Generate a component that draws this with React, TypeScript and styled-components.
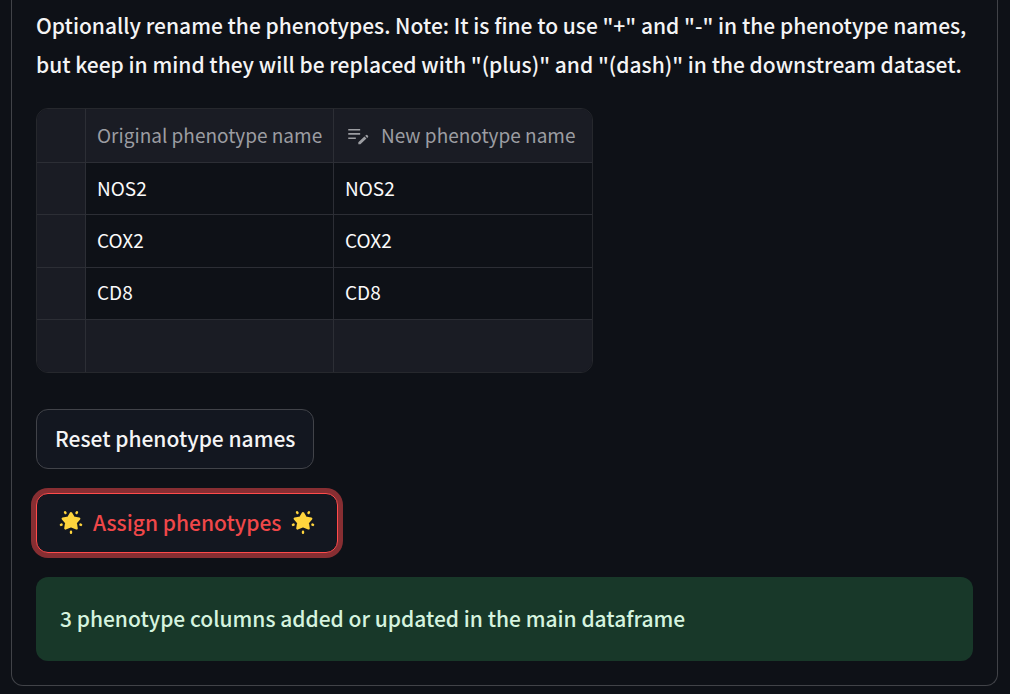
import React from "react";
import styled, { createGlobalStyle, css } from "styled-components";

const GlobalStyle = createGlobalStyle`
  *, *::before, *::after { box-sizing: border-box; }
  body {
    margin: 0;
    background: #0e1117;
    color: #f4f4f5;
    font-family: "Noto Sans CJK SC", "Noto Sans", sans-serif;
    font-size: 21px;
    font-weight: 500;
    line-height: 39px;
  }
`;

const Page = styled.main`
  padding: 0 12px 8px 11px;
`;

const Panel = styled.section`
  display: flex;
  flex-direction: column;
  align-items: flex-start;
  padding: 6px 24px 24px;
  border: 1px solid #414348;
  border-top: 0;
  border-radius: 0 0 12px 12px;
`;

const Instructions = styled.p`
  margin: 0 0 24px;
`;

const GridFrame = styled.div`
  overflow: hidden;
  margin-bottom: 36px;
  border: 1px solid #26282d;
  border-radius: 12px;
`;

const Grid = styled.table`
  border-collapse: separate;
  border-spacing: 0;
  table-layout: fixed;
  width: 555px;
  height: 263px;
  font-size: 19px;
  line-height: 28px;
`;

const IndexColumn = styled.col`
  width: 49px;
`;

const OriginalColumn = styled.col`
  width: 248px;
`;

const cell = css`
  height: 52px;
  padding: 0 11px 2px;
  text-align: left;
  font-weight: 400;
  white-space: nowrap;
  border-right: 1px solid #2c2e35;
  border-bottom: 1px solid #2c2e35;

  &:last-child { border-right: 0; }
`;

const HeadCell = styled.th`
  ${cell}
  height: 54px;
  background: #1a1c24;
  color: #9c9da2;
`;

const Cell = styled.td<{ $shaded?: boolean; $last?: boolean }>`
  ${cell}
  color: #fafafa;
  background: ${(p) => (p.$shaded ? "#1a1c24" : "#0e1117")};
  ${(p) => p.$last && "border-bottom: 0;"}
`;

const HeadLabel = styled.span`
  display: flex;
  align-items: center;
  gap: 10px;
`;

const Button = styled.button<{ $active?: boolean }>`
  display: flex;
  align-items: center;
  gap: 9px;
  height: 60px;
  margin: 0 0 24px;
  padding: 0 ${(p) => (p.$active ? 21 : 18)}px 2px;
  border: 1px solid ${(p) => (p.$active ? "#ff4b4b" : "#414349")};
  border-radius: 12px;
  background: #131720;
  color: ${(p) => (p.$active ? "#f04749" : "#f4f4f5")};
  box-shadow: ${(p) => (p.$active ? "0 0 0 5px #872e32" : "none")};
  font: inherit;
  white-space: nowrap;
  cursor: pointer;
`;

const Alert = styled.div`
  align-self: stretch;
  padding: 22px 24px 23px;
  border-radius: 12px;
  background: #183829;
  color: #d5f3df;
`;

const EditIcon = () => (
  <svg width="26" height="26" viewBox="0 0 24 24" fill="currentColor" aria-hidden="true">
    <path d="M3 10.2h11v1.6H3zM3 6.4h11v1.4H3zM3 14.2h7v1.4H3zM18.6 12.8l.7-.6a1 1 0 0 1 1.4 0l.5.5c.4.4.4 1 0 1.4l-.7.6zM17.9 13.4l-5.6 5.2v1.9h1.9l5.6-5.2z" />
  </svg>
);

const GlowingStar = () => (
  <svg width="26" height="26" viewBox="0 0 26 26" fill="#ffd53d" stroke="#ffd53d" strokeLinejoin="round" strokeLinecap="round" aria-hidden="true">
    <path strokeWidth="2.4" d="M13 4.2l2.6 4.5 5.6.9-3.5 4.1.9 5.7-5.6-2.3-5.6 2.3.9-5.7-3.5-4.1 5.6-.9z" />
    <path strokeWidth="2.4" d="M7 3.2l.5.8M19 3.2l-.5.8M2.9 15.9l.7-.3M23.1 15.9l-.7-.3M13 22.7v1" />
  </svg>
);

const rows = ["NOS2", "COX2", "CD8"];

export default function App() {
  return (
    <>
      <GlobalStyle />
      <Page>
        <Panel>
          <Instructions>
            Optionally rename the phenotypes. Note: It is fine to use "+" and "-" in the phenotype names,
            but keep in mind they will be replaced with "(plus)" and "(dash)" in the downstream dataset.
          </Instructions>
          <GridFrame>
            <Grid>
              <colgroup>
                <IndexColumn />
                <OriginalColumn />
                <col />
              </colgroup>
              <thead>
                <tr>
                  <HeadCell />
                  <HeadCell scope="col">Original phenotype name</HeadCell>
                  <HeadCell scope="col">
                    <HeadLabel>
                      <EditIcon />
                      New phenotype name
                    </HeadLabel>
                  </HeadCell>
                </tr>
              </thead>
              <tbody>
                {rows.map((name) => (
                  <tr key={name}>
                    <Cell $shaded />
                    <Cell>{name}</Cell>
                    <Cell>{name}</Cell>
                  </tr>
                ))}
                <tr>
                  <Cell $shaded $last />
                  <Cell $shaded $last />
                  <Cell $shaded $last />
                </tr>
              </tbody>
            </Grid>
          </GridFrame>
          <Button type="button">Reset phenotype names</Button>
          <Button type="button" $active>
            <GlowingStar />
            Assign phenotypes
            <GlowingStar />
          </Button>
          <Alert role="status">3 phenotype columns added or updated in the main dataframe</Alert>
        </Panel>
      </Page>
    </>
  );
}
